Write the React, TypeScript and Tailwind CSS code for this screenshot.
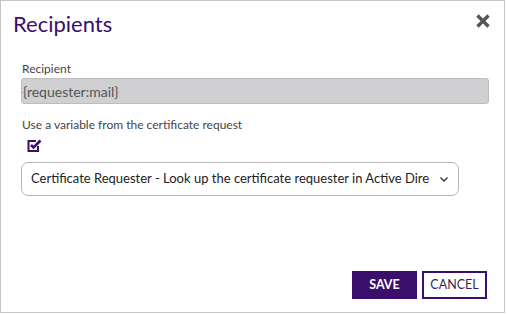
import React from "react";

export default function App() {
  return (
    <div className="w-[507px] h-[315px] bg-white" style={{ fontFamily: "Lato, 'Open Sans', sans-serif" }}>
      <div className="w-[505px] h-[313px] border border-[#c4c4c4] flex flex-col">
        <div className="flex items-start justify-between pl-[12px] pr-[12px] pt-[8px]">
          <h1 className="text-[22px] leading-[30px] text-[#3a0f6b]">Recipients</h1>
          <svg width="16" height="16" viewBox="0 0 16 16" className="mt-[4px] mr-[1px]">
            <path d="M2.5 2.5 L13.5 13.5 M13.5 2.5 L2.5 13.5" stroke="#555" strokeWidth="3.4" strokeLinecap="butt" />
          </svg>
        </div>
        <div className="pl-[20px] pr-[15px] pt-[22px] flex flex-col">
          <label className="text-[12px] leading-[16px] text-[#444] pl-[1px]">Recipient</label>
          <div className="mt-[1px] h-[26px] rounded-[3px] border border-[#bdbdbd] bg-[#d0d0d3] flex items-center px-[1px] text-[14px] text-[#555]">
            {"{requester:mail}"}
          </div>
          <div className="mt-[13px] text-[12px] leading-[16px] text-[#444] pl-[1px]">Use a variable from the certificate request</div>
          <div className="mt-[5px] pl-[6px] h-[15px]">
            <svg width="15" height="15" viewBox="0 0 15 15">
              <path d="M11 8 V13 H1.5 V3 H9" fill="none" stroke="#3a0f6b" strokeWidth="2" />
              <path d="M4 7 L6.5 9.5 L13.5 2.5" fill="none" stroke="#3a0f6b" strokeWidth="2.6" />
            </svg>
          </div>
          <div className="mt-[9px] w-[438px] h-[34px] rounded-[7px] border border-[#b8b8b8] flex items-center justify-between pl-[9px] pr-[9px]">
            <span className="text-[13px] text-[#222] whitespace-nowrap">Certificate Requester - Look up the certificate requester in Active Dire</span>
            <svg width="10" height="8" viewBox="0 0 10 8" className="shrink-0">
              <path d="M1.5 2.5 L5 6 L8.5 2.5" fill="none" stroke="#333" strokeWidth="1.4" />
            </svg>
          </div>
        </div>
        <div className="mt-auto flex justify-end gap-[5px] pr-[17px] pb-[13px]">
          <button className="w-[65px] h-[28px] bg-[#3a0f6b] text-white text-[12.5px] font-bold">SAVE</button>
          <button className="w-[65px] h-[28px] border-2 border-[#3a0f6b] text-[#3a1f5b] text-[12.5px]">CANCEL</button>
        </div>
      </div>
    </div>
  );
}
